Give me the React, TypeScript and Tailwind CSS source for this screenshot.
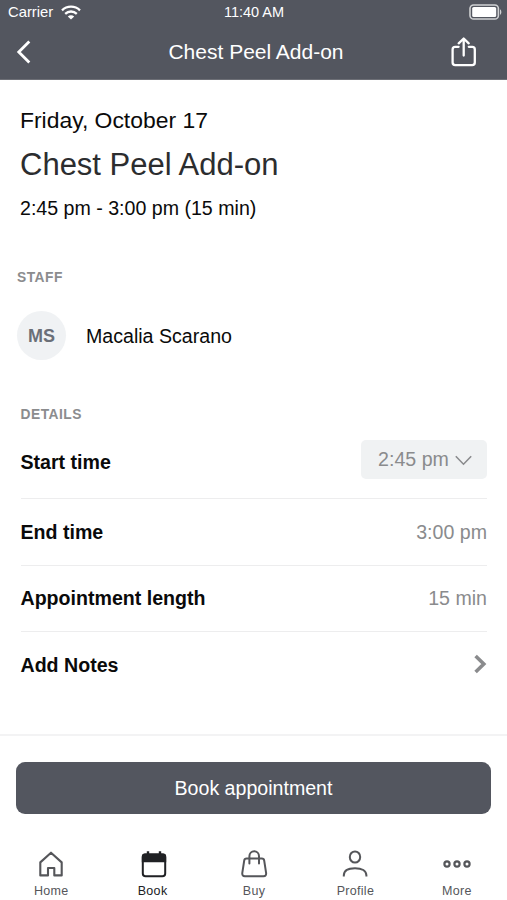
import React from 'react';

interface DetailRow {
  label: string;
  value: string;
}

interface Tab {
  label: string;
  icon: React.ReactNode;
  active?: boolean;
}

const rows: DetailRow[] = [
  { label: 'End time', value: '3:00 pm' },
  { label: 'Appointment length', value: '15 min' },
];

const HomeIcon = () => (
  <svg width="28" height="28" viewBox="0 0 28 28" fill="none" stroke="currentColor" strokeWidth="2.1" strokeLinejoin="round">
    <path d="M3.3 12.4 14 2.7 24.7 12.4V25.4H17.3V18H11V25.4H3.3Z" />
  </svg>
);

const BookIcon = () => (
  <svg width="28" height="28" viewBox="0 0 28 28" fill="none" stroke="currentColor" strokeWidth="2">
    <rect x="3.8" y="4.4" width="22.4" height="21.9" rx="2.8" />
    <path d="M2.8 12.3V6.6A3 3 0 0 1 5.8 3.6H24.2A3 3 0 0 1 27.2 6.6V12.3Z" fill="currentColor" stroke="none" />
    <path d="M9 1.2V5M21 1.2V5" strokeWidth="2.4" />
  </svg>
);

const BuyIcon = () => (
  <svg width="28" height="28" viewBox="0 0 28 28" fill="none" stroke="currentColor" strokeWidth="2" strokeLinecap="round" strokeLinejoin="round">
    <path d="M6.6 8.6H21.8Q23.9 8.6 24.2 10.6L26.1 22.8Q26.5 26.2 23.5 26.2H4.9Q1.9 26.2 2.3 22.8L4.2 10.6Q4.5 8.6 6.6 8.6Z" />
    <path d="M9.4 13.4V6.2A4.8 4.9 0 0 1 19 6.2V13.4" />
  </svg>
);

const ProfileIcon = () => (
  <svg width="28" height="28" viewBox="0 0 28 28" fill="none" stroke="currentColor" strokeWidth="2">
    <ellipse cx="14" cy="7" rx="5.2" ry="5.6" />
    <path d="M2.8 26.6V25.6C2.8 21 7 18.2 14 18.2S25.4 21 25.4 25.6V26.6" />
  </svg>
);

const MoreIcon = () => (
  <svg width="28" height="28" viewBox="0 0 28 28" fill="none" stroke="currentColor" strokeWidth="2.2">
    <circle cx="4" cy="14" r="2.6" />
    <circle cx="14" cy="14" r="2.6" />
    <circle cx="24" cy="14" r="2.6" />
  </svg>
);

const tabs: Tab[] = [
  { label: 'Home', icon: <HomeIcon /> },
  { label: 'Book', icon: <BookIcon />, active: true },
  { label: 'Buy', icon: <BuyIcon /> },
  { label: 'Profile', icon: <ProfileIcon /> },
  { label: 'More', icon: <MoreIcon /> },
];

const StatusBar = () => (
  <div className="grid h-6 grid-cols-3 items-center pl-2 pr-[5px]">
    <div className="flex items-center gap-2">
      <span className="text-[14.8px] leading-6">Carrier</span>
      <svg width="20" height="15" viewBox="0 0 20 15" fill="none" stroke="currentColor" strokeWidth="2.3">
        <path d="M1 5.3C6 .5 14 .5 19 5.3" />
        <path d="M4.2 8.8C7.5 5.7 12.5 5.7 15.8 8.8" />
        <path d="M10 14.5 6.8 11.4C8.7 9.8 11.3 9.8 13.2 11.4Z" fill="currentColor" stroke="none" />
      </svg>
    </div>
    <span className="-ml-0.5 text-center text-[14.5px] leading-6">11:40 AM</span>
    <svg className="justify-self-end" width="33" height="16" viewBox="0 0 33 16" fill="none">
      <rect x="1" y="1" width="28.4" height="14" rx="3.6" stroke="#d0d1d3" strokeWidth="1.6" />
      <rect x="3.2" y="3" width="24" height="10" rx="1.6" fill="#fff" />
      <path d="M31 5.2C32.8 6 32.8 10 31 10.8Z" fill="#d0d1d3" />
    </svg>
  </div>
);

const Header = () => (
  <header className="h-20 border-b border-[#6d6f76] bg-[#53565f] text-white">
    <StatusBar />
    <div className="grid h-14 grid-cols-[60px_1fr_60px] items-center">
      <button className="pl-4" aria-label="Back">
        <svg width="16" height="24" viewBox="0 0 16 24" fill="none" stroke="currentColor" strokeWidth="2.8">
          <path d="M13.3 1.6 2.8 12 13.3 22.4" />
        </svg>
      </button>
      <h1 className="pl-[5px] text-center text-[21px] leading-7">Chest Peel Add-on</h1>
      <button className="pl-1" aria-label="Share">
        <svg width="26" height="31" viewBox="0 0 26 31" fill="none" stroke="currentColor" strokeWidth="2.3" strokeLinecap="round" strokeLinejoin="round">
          <path d="M7.6 9.8H4.2Q1.6 9.8 1.6 12.4V25.6Q1.6 28.2 4.2 28.2H21.2Q23.8 28.2 23.8 25.6V12.4Q23.8 9.8 21.2 9.8H17.8" />
          <path d="M12.7 18.5V2M7.7 6.3 12.7 1.5 17.7 6.3" />
        </svg>
      </button>
    </div>
  </header>
);

const App: React.FC = () => {
  return (
    <div className="flex h-[900px] w-[507px] flex-col overflow-hidden bg-white font-['Liberation_Sans',Arial,sans-serif] text-[19.6px] text-[#0a0a0a]">
      <Header />

      <main className="flex-1">
        <section className="px-5 pt-[26px]">
          <p className="text-[22.9px] leading-7">Friday, October 17</p>
          <h2 className="mt-[13px] text-[31px] leading-9 text-[#2c2d2f]">Chest Peel Add-on</h2>
          <p className="mt-[13px] leading-6">2:45 pm - 3:00 pm (15 min)</p>
        </section>

        <section className="px-[17px] pt-12">
          <h3 className="text-[13.8px] font-bold leading-5 tracking-[0.5px] text-[#8b8c8e]">STAFF</h3>
          <div className="mt-[23px] flex items-center gap-5">
            <div className="flex size-[49px] items-center justify-center rounded-full bg-[#f0f2f4] pt-px text-[18px] font-bold text-[#6b6f78]">MS</div>
            <span className="pt-0.5">Macalia Scarano</span>
          </div>
        </section>

        <section className="pl-[20.5px] pr-5 pt-[45px]">
          <h3 className="text-[13.8px] font-bold leading-5 tracking-[0.5px] text-[#8b8c8e]">DETAILS</h3>
          <div className="flex h-[74px] items-center justify-between border-b border-[#ededee]">
            <span className="pt-[3px] font-bold">Start time</span>
            <button className="mb-1 flex h-[39px] w-[126px] items-center justify-center gap-1.5 rounded-[5px] bg-[#f0f2f3] pl-0.5 text-[#8a8b8d]">
              2:45 pm
              <svg className="mt-0.5" width="17" height="11" viewBox="0 0 17 11" fill="none" stroke="currentColor" strokeWidth="1.6">
                <path d="M.8 1.2 8.5 9.2 16.2 1.2" />
              </svg>
            </button>
          </div>
          {rows.map(row => (
            <div key={row.label} className="flex h-[66.5px] items-center justify-between border-b border-[#ededee]">
              <span className="pt-px font-bold">{row.label}</span>
              <span className="pt-px text-[#8a8b8d]">{row.value}</span>
            </div>
          ))}
          <div className="flex h-[66px] items-center justify-between">
            <span className="pt-px font-bold">Add Notes</span>
            <svg className="mb-0.5" width="13" height="20" viewBox="0 0 13 20" fill="none" stroke="#8a8b8d" strokeWidth="3.6">
              <path d="M1.6 2 9.8 10 1.6 18" />
            </svg>
          </div>
        </section>
      </main>

      <footer className="h-[166px] border-t-2 border-[#f3f3f4]">
        <div className="px-4 pt-[26px]">
          <button className="h-[52px] w-full rounded-[9px] bg-[#53565f] pt-0.5 text-white">Book appointment</button>
        </div>
        <nav className="mt-9 grid grid-cols-5">
          {tabs.map(tab => (
            <div key={tab.label} className={`flex flex-col items-center gap-1 pl-px ${tab.active ? 'text-[#202124]' : 'text-[#55565a]'}`}>
              {tab.icon}
              <span className="text-[12.5px] leading-[19px] tracking-[0.3px]">{tab.label}</span>
            </div>
          ))}
        </nav>
      </footer>
    </div>
  );
};

export default App;
